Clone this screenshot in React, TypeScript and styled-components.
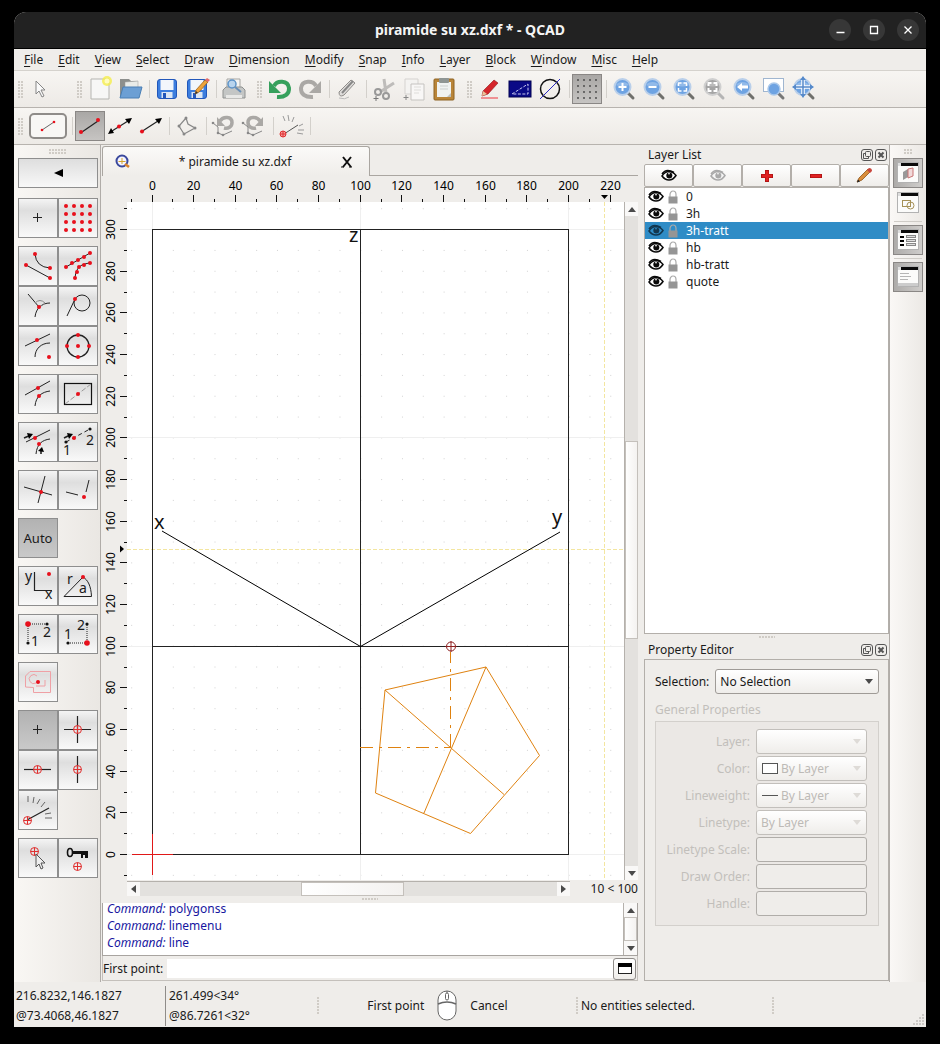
import React from "react";
import styled, { createGlobalStyle, css } from "styled-components";

const GlobalStyle = createGlobalStyle`
  *, *::before, *::after { box-sizing: border-box; }
  body { margin: 0; background: #000; }
  body, button, input, select {
    font-family: "Noto Sans", "Open Sans", sans-serif;
    font-size: 12px;
    color: #1a1a1a;
  }
  button { cursor: default; }
  svg { display: block; }
`;

/* ---------- window frame ---------- */

const Desktop = styled.div`
  min-height: 100vh;
  padding: 12px 14px 17px;
  display: flex;
  background: #000;
`;
const Window = styled.div`
  flex: 1;
  min-width: 0;
  display: flex;
  flex-direction: column;
  background: #efedea;
  border-radius: 12px 12px 0 0;
  overflow: hidden;
`;
const TitleBar = styled.header`
  height: 37px;
  display: grid;
  grid-template-columns: 1fr auto 1fr;
  align-items: center;
  background: #222;
  border-bottom: 1px solid #000;
`;
const Title = styled.h1`
  grid-column: 2;
  margin: 0;
  font-size: 14px;
  line-height: 20px;
  font-weight: 700;
  color: #f4f4f4;
`;
const WindowButtons = styled.div`
  justify-self: end;
  display: flex;
  gap: 12px;
  padding-right: 7px;
`;
const WindowButton = styled.button`
  width: 22px;
  height: 22px;
  padding: 0;
  border: 0;
  border-radius: 50%;
  background: #373737;
`;

/* ---------- menu ---------- */

const MenuBar = styled.nav`
  height: 22px;
  display: flex;
  align-items: center;
  padding: 0 2px;
  border-bottom: 1px solid #d5d2cd;
`;
const MenuItem = styled.button`
  padding: 0 7px 0 8px;
  border: 0;
  background: none;
  line-height: 20px;
  white-space: nowrap;
  &::first-letter { text-decoration: underline; text-underline-offset: 2px; }
`;

/* ---------- tool bars ---------- */

const ToolBar = styled.div`
  height: 37px;
  display: flex;
  align-items: center;
  background: linear-gradient(#f7f5f2, #edeae6);
  border-bottom: 1px solid #b7b3ae;
`;
const ToolGroup = styled.div<{ $gap?: number }>`
  display: flex;
  align-items: center;
  margin-right: ${(p) => p.$gap ?? 4}px;
`;
const dots = css`
  background-image: radial-gradient(circle at 1px 1px, #d0ccc6 1px, transparent 1px);
  background-size: 3px 3px;
`;
const Grip = styled.span<{ $w: number; $h: number }>`
  ${dots}
  flex: none;
  width: ${(p) => p.$w}px;
  height: ${(p) => p.$h}px;
`;
const BarGrip = styled(Grip)`
  margin: 0 3px 0 4px;
`;
const Divider = styled.span`
  flex: none;
  width: 1px;
  height: 18px;
  margin: 0 2px 0 4px;
  background: #d3d0cb;
`;
const ToolButton = styled.button<{ $on?: boolean }>`
  width: 30px;
  height: 30px;
  padding: 0;
  display: flex;
  align-items: center;
  justify-content: center;
  border: 1px solid ${(p) => (p.$on ? "#8a8785" : "transparent")};
  background: ${(p) => (p.$on ? "linear-gradient(#a9a7a5, #c6c4c2)" : "none")};
`;
const CurrentTool = styled.button`
  width: 38px;
  height: 26px;
  margin: 0 1px 0 3px;
  padding: 0;
  display: flex;
  align-items: center;
  justify-content: center;
  border: 2px solid #8f8c89;
  border-radius: 5px;
  background: #f8f7f5;
`;

/* ---------- body columns ---------- */

const Body = styled.div`
  flex: 1;
  display: flex;
  min-height: 0;
`;
const SnapDock = styled.aside`
  flex: none;
  width: 87px;
  padding: 4px 2px 0 4px;
  display: flex;
  flex-direction: column;
  align-items: center;
  gap: 8px;
  background: linear-gradient(90deg, #f9f7f4, #eae7e3);
  border-right: 1px solid #b0aca8;
`;
const BackButton = styled.button`
  width: 80px;
  height: 30px;
  margin: -5px 0 2px;
  padding: 0;
  display: flex;
  align-items: center;
  justify-content: center;
  border: 1px solid #8e8e8e;
  background: linear-gradient(#dedede, #f8f8f8);
`;
const SnapGroup = styled.div`
  width: 80px;
  display: grid;
  grid-template-columns: 40px 40px;
`;
const SnapButton = styled.button<{ $on?: boolean }>`
  width: 40px;
  height: 40px;
  padding: 0;
  display: flex;
  align-items: center;
  justify-content: center;
  font-size: 13px;
  border: 1px solid #8e8e8e;
  background: ${(p) => (p.$on ? "linear-gradient(#b2b2b2, #c9c9c9)" : "linear-gradient(#f4f4f4, #dedede 30%, #f9f9f9)")};
  svg { width: 38px; height: 38px; overflow: visible; }
`;

const Center = styled.main`
  flex: 1;
  min-width: 0;
  display: flex;
  flex-direction: column;
  padding: 0 6px 1px 1px;
`;
const TabBar = styled.div`
  height: 31px;
  padding-top: 1px;
  display: flex;
  align-items: stretch;
`;
const Tab = styled.div`
  width: 268px;
  display: grid;
  grid-template-columns: 16px 1fr 16px;
  align-items: center;
  padding: 0 14px 0 12px;
  text-align: center;
  background: linear-gradient(#fbfaf8, #efedea);
  border: 1px solid #aaa6a1;
  border-bottom: 0;
  border-radius: 3px 3px 0 0;
`;
const TabFill = styled.div`
  flex: 1;
  border-bottom: 1px solid #aaa6a1;
`;
const TabClose = styled.button`
  padding: 0;
  border: 0;
  background: none;
`;
const ViewGrid = styled.div`
  flex: 1;
  min-height: 0;
  display: grid;
  grid-template-columns: 25px minmax(0, 1fr) 14px;
  grid-template-rows: 26px minmax(0, 1fr) 16px;
`;
const TopRuler = styled.svg`
  grid-column: 1 / 4;
  width: 100%;
  height: 26px;
`;
const SideRuler = styled.svg`
  width: 25px;
  height: 100%;
`;
const Canvas = styled.svg`
  width: 100%;
  height: 100%;
  background: #fff;
`;
const BottomRow = styled.div`
  grid-column: 2 / 4;
  display: flex;
  align-items: center;
  min-width: 0;
`;
const Readout = styled.span`
  width: 68px;
  text-align: right;
  line-height: 15px;
  white-space: nowrap;
`;

const Scroller = styled.div<{ $dir: "row" | "column" }>`
  flex: 1;
  min-width: 0;
  min-height: 0;
  display: flex;
  flex-direction: ${(p) => p.$dir};
  background: #e3e1de;
  border-${(p) => (p.$dir === "row" ? "top" : "left")}: 1px solid #b5b1ac;
  ${(p) => (p.$dir === "row" ? "height: 15px;" : "width: 14px;")}
`;
const ScrollButton = styled.button`
  flex: none;
  width: 13px;
  height: 14px;
  padding: 0;
  display: flex;
  align-items: center;
  justify-content: center;
  border: 0;
  background: #f9f8f7;
`;
const ScrollSpace = styled.div<{ $grow: number }>`
  flex: ${(p) => p.$grow} 1 0;
`;
const ScrollThumb = styled(ScrollSpace)`
  background: linear-gradient(90deg, #fff, #f3f1ef);
  outline: 1px solid #c4c0bb;
  outline-offset: -1px;
`;

const Splitter = styled.div`
  height: 7px;
  display: flex;
  align-items: center;
  justify-content: center;
`;
const CommandLog = styled.div`
  height: 53px;
  display: flex;
  background: #fff;
  border: solid #a8a4a0;
  border-width: 0 1px 1px;
`;
const LogLines = styled.div`
  flex: 1;
  display: flex;
  flex-direction: column;
  justify-content: flex-end;
  padding: 0 4px 4px;
  color: #1616a0;
`;
const LogLine = styled.p`
  flex: none;
  margin: 0;
  line-height: 17px;
`;
const LogScroll = styled.div`
  width: 14px;
  display: flex;
`;
const CommandRow = styled.div`
  height: 25px;
  padding: 1px 1px 0 0;
  display: flex;
  align-items: center;
  border: solid #c4c0bb;
  border-width: 0 1px 1px;
`;
const CommandInput = styled.input`
  flex: 1;
  min-width: 0;
  height: 19px;
  margin-left: 4px;
  padding: 0 4px;
  border: 0;
  background: #fff;
`;
const SmallButton = styled.button`
  width: 23px;
  height: 22px;
  padding: 0;
  display: flex;
  align-items: center;
  justify-content: center;
  border: 1px solid #8f8c89;
  border-radius: 3px;
  background: linear-gradient(#fff, #efedea);
`;

/* ---------- right dock ---------- */

const RightDock = styled.aside`
  flex: none;
  width: 245px;
  display: flex;
  flex-direction: column;
  padding-bottom: 1px;
`;
const PanelHead = styled.div`
  height: 19px;
  display: flex;
  align-items: center;
  gap: 2px;
  padding: 0 2px 0 4px;
`;
const PanelTitle = styled.h2`
  flex: 1;
  margin: 0;
  font-size: 12px;
  line-height: 18px;
  font-weight: 400;
`;
const HeadButton = styled.button`
  width: 12px;
  height: 12px;
  padding: 0;
  border: 0;
  background: none;
`;
const LayerTools = styled.div`
  height: 23px;
  display: grid;
  grid-template-columns: repeat(5, 1fr);
`;
const LayerTool = styled.button`
  padding: 0;
  display: flex;
  align-items: center;
  justify-content: center;
  border: 1px solid #b3afaa;
  border-radius: 2px;
  background: linear-gradient(#fff, #efedea);
`;
const LayerItems = styled.ul`
  height: 447px;
  margin: 0;
  padding: 0;
  list-style: none;
  background: #fff;
  border: 1px solid #b3afaa;
`;
const LayerItem = styled.li<{ $selected?: boolean }>`
  height: 17px;
  display: flex;
  align-items: center;
  line-height: 17px;
  padding-left: 3px;
  gap: 3px;
  ${(p) => p.$selected && "background: #2f8cc6; color: #fff;"}
`;
const LayerName = styled.span`
  margin-left: 4px;
`;
const LayerSplitter = styled(Splitter)`
  height: 6px;
`;
const PropertyBox = styled.div`
  flex: 1;
  padding: 9px 9px 9px 10px;
  border: 1px solid #b3afaa;
`;
const SelectionRow = styled.div`
  display: flex;
  align-items: center;
  gap: 6px;
`;
const Combo = styled.span<{ $disabled?: boolean }>`
  flex: 1;
  position: relative;
  display: block;
  height: 25px;
  select {
    appearance: none;
    width: 100%;
    height: 25px;
    padding: 0 4px;
    border: 1px solid ${(p) => (p.$disabled ? "#c2bfbb" : "#9f9b97")};
    border-radius: 3px;
    background: linear-gradient(#fff, #efedea);
    color: ${(p) => (p.$disabled ? "#bdbab6" : "#1a1a1a")};
    opacity: 1;
  }
`;
const ComboArrow = styled.svg`
  position: absolute;
  right: 6px;
  top: 10px;
  pointer-events: none;
`;
const Swatch = styled.svg`
  position: absolute;
  left: 6px;
  top: 7px;
  pointer-events: none;
`;
const IconCombo = styled(Combo)`
  select { padding-left: 24px; }
`;
const GroupTitle = styled.h3`
  margin: 7px 0 2px;
  font-size: 12px;
  line-height: 18px;
  font-weight: 400;
  color: #c2bfbb;
`;
const PropertyGroup = styled.div`
  padding: 7px 11px 9px 10px;
  display: grid;
  row-gap: 2px;
  background: #ebe8e5;
  border: 1px solid #d3d0cc;
`;
const PropertyRow = styled.div`
  height: 25px;
  display: grid;
  grid-template-columns: 1fr 111px;
  align-items: center;
  column-gap: 6px;
  label { text-align: right; color: #c2bfbb; }
`;
const PropertyInput = styled.input`
  width: 100%;
  height: 25px;
  padding: 0 4px;
  border: 1px solid #b0ada9;
  border-radius: 3px;
  background: #efedea;
`;

const SideBar = styled.aside`
  flex: none;
  width: 37px;
  padding: 3px 2px 0;
  display: flex;
  flex-direction: column;
  align-items: center;
  border-left: 1px solid #b0aca8;
  background: linear-gradient(90deg, #faf8f6, #ebe8e4);
`;
const SideButton = styled(ToolButton)<{ $on?: boolean }>`
  flex: none;
  ${(p) => p.$on && "background: linear-gradient(90deg, #adaba9, #cfcdcb);"}
`;
const SideLine = styled.span`
  width: 28px;
  height: 1px;
  margin: 3px 0;
  background: #cfccc7;
`;
const SideGrip = styled(Grip)`
  margin: 1px 0 3px;
`;

/* ---------- status bar ---------- */

const StatusBar = styled.footer`
  height: 45px;
  padding-top: 2px;
  display: flex;
  align-items: center;
  line-height: 20px;
  white-space: nowrap;
`;
const Coordinates = styled.div<{ $line?: boolean }>`
  width: ${(p) => (p.$line ? 152 : 151)}px;
  height: 40px;
  padding-left: ${(p) => (p.$line ? 3 : 2)}px;
  ${(p) => p.$line && "border-left: 1px solid #8f8c89;"}
`;
const MouseHints = styled.div`
  width: 256px;
  padding-right: 21px;
  display: flex;
  align-items: center;
  justify-content: center;
  gap: 13px;
`;
const StatusText = styled.span`
  width: 193px;
  padding-left: 2px;
`;
const SizeGrip = styled.span`
  align-self: flex-end;
  margin-left: auto;
`;

/* ---------- icon helpers ---------- */

type Pt = [number, number];
const RED = "#e8101c";

const Dots = ({ at, r = 2, fill = RED }: { at: Pt[]; r?: number; fill?: string }) => (
  <>
    {at.map(([x, y]) => (
      <circle key={`${x}-${y}`} cx={x} cy={y} r={r} fill={fill} />
    ))}
  </>
);
const Target = ({ x, y, r = 4 }: { x: number; y: number; r?: number }) => (
  <g fill="none" stroke="#e03030" strokeWidth="1">
    <circle cx={x} cy={y} r={r} />
    <path d={`M${x - r} ${y}h${r * 2}M${x} ${y - r}v${r * 2}`} />
  </g>
);
const Ink = ({ d, w = 1, c = "#222", dash }: { d: string; w?: number; c?: string; dash?: string }) => (
  <path d={d} fill="none" stroke={c} strokeWidth={w} strokeDasharray={dash} />
);
const Glyph = ({ x, y, children, size = 14 }: { x: number; y: number; children: string; size?: number }) => (
  <text x={x} y={y} fontSize={size} fill="#1a1a1a">{children}</text>
);
const Snap = ({ children }: { children: React.ReactNode }) => (
  <svg viewBox="1 1 38 38" aria-hidden="true">{children}</svg>
);
const Icon = ({ children, size = 26 }: { children: React.ReactNode; size?: number }) => (
  <svg width={size} height={size} viewBox="0 0 26 26" aria-hidden="true">{children}</svg>
);

const Arrow = ({ dir, fill = "#4a4a4a" }: { dir: "up" | "down" | "left" | "right"; fill?: string }) => {
  const shapes = { up: "0,5 4,0 8,5", down: "0,0 8,0 4,5", left: "5,0 5,8 0,4", right: "0,0 5,4 0,8" };
  const flat = dir === "up" || dir === "down";
  return (
    <svg width={flat ? 8 : 5} height={flat ? 5 : 8} aria-hidden="true">
      <polygon points={shapes[dir]} fill={fill} />
    </svg>
  );
};

/* ---------- snap tool drawings ---------- */

type Tool = { name: string; art: React.ReactNode; on?: boolean };
const PLUS = <Ink d="M15 19.5h9M19.5 15v9" />;

const snapGroups: Tool[][] = [
  [
    { name: "Free", art: PLUS },
    { name: "Grid", art: <Dots at={[8, 16, 24, 32].flatMap((x) => [8, 16, 24, 32].map((y): Pt => [x, y]))} /> },
  ],
  [
    { name: "End points", art: <><Ink d="M8 19L32 32M17 8Q18 21 32 22" /><Dots at={[[8, 19], [32, 32], [17, 8], [32, 22]]} /></> },
    { name: "On entity", art: <><Ink d="M8 21L32 7M17 32C18 20 24 18 32 17" /><Dots at={[[8, 21], [14, 17], [20, 14], [26, 11], [32, 7], [32, 17], [26, 19], [21, 21], [19, 26], [17, 32]]} /></> },
    { name: "Perpendicular", art: <><Ink d="M10 8L21 21M17 31C18 22 24 17 32 17" /><Ink d="M17 17Q22 12 27 17Q24 20 21 21" c="#888" /><Dots at={[[21, 21]]} /></> },
    { name: "Tangential", art: <><Ink d="M17 13L9 30" /><circle cx="24" cy="17" r="8" fill="none" stroke="#222" /><Dots at={[[17, 13]]} /></> },
    { name: "Reference", art: <><Ink d="M7 20L32 8M17 31C17 23 23 17 32 17" /><Dots at={[[19, 14], [31, 31]]} /></> },
    { name: "Center", art: <><circle cx="20" cy="20" r="11" fill="none" stroke="#222" strokeWidth="1.3" /><Dots at={[[20, 20], [9, 20], [31, 20], [20, 9], [20, 31]]} /></> },
  ],
  [
    { name: "Middle", art: <><Ink d="M7 21L32 7M17 32C18 22 24 18 32 17" /><Dots at={[[20, 14], [21, 22]]} /></> },
    { name: "Middle of two", art: <><rect x="6.5" y="9.5" width="27" height="21" fill="none" stroke="#111" strokeWidth="1.2" /><Ink d="M7 30L33 10" c="#999" dash="5 2" /><Dots at={[[20, 20]]} /></> },
  ],
  [
    { name: "Distance", art: <><Ink d="M8 20L32 8M18 32C19 22 24 18 32 17" /><Ink d="M6 16L13 13M23 32V28" w={1.6} /><path d="M9 11l6 1-4 5zM20 29l4-4 2 5z" /><Dots at={[[17, 16], [21, 22]]} /></> },
    { name: "Distance between", art: <><Ink d="M8 20L32 7" dash="4 3" /><Ink d="M6 16L12 13" w={1.6} /><path d="M9 11l6 1-4 5z" /><Dots at={[[8, 20], [32, 7]]} r={1.6} fill="#111" /><Dots at={[[16, 16]]} /><Glyph x={5} y={33}>1</Glyph><Glyph x={28} y={23}>2</Glyph></> },
  ],
  [
    { name: "Intersection", art: <><Ink d="M6 17L34 25M27 6L20 33" /><Dots at={[[23, 22]]} /></> },
    { name: "Manual intersection", art: <><Ink d="M8 22L20 25M31 10L28 22" /><Dots at={[[26, 27]]} /></> },
  ],
  [{ name: "Auto", art: null, on: true }],
  [
    { name: "Cartesian coordinate", art: <><Ink d="M16.5 6V24.5H34" w={1.2} /><Glyph x={7} y={15}>y</Glyph><Glyph x={27} y={33}>x</Glyph><Dots at={[[31, 8]]} /></> },
    { name: "Polar coordinate", art: <><Ink d="M25 11L6 30.5H33.500C33 20 30 14 25 11" /><Glyph x={9} y={18}>r</Glyph><Glyph x={21} y={27}>a</Glyph><Dots at={[[25, 11]]} /></> },
  ],
  [
    { name: "Restrict xy", art: <><Ink d="M10 10H29M10 10V29" dash="1 1" /><Dots at={[[29, 10], [10, 29]]} r={1.6} fill="#111" /><Dots at={[[10, 10]]} r={2.8} /><Glyph x={13} y={32}>1</Glyph><Glyph x={25} y={23}>2</Glyph></> },
    { name: "Restrict yx", art: <><Ink d="M10 29H29V10" dash="1 1" /><Dots at={[[10, 29], [29, 10]]} r={1.6} fill="#111" /><Dots at={[[29, 29]]} r={2.8} /><Glyph x={6} y={25}>1</Glyph><Glyph x={19} y={16}>2</Glyph></> },
  ],
  [{ name: "Interactive point", art: <><Ink d="M7.500 25V14L12 9.500H32.500V30.500H15.500V25.500zM19 14a4.500 4.500 0 1 0-1 7M27 18v6h-9" c="#efa0a5" /><Dots at={[[20, 20]]} /></> }],
  [
    { name: "Restrict off", art: PLUS, on: true },
    { name: "Restrict orthogonally", art: <><Ink d="M6 19.500h27M19.500 6v27" w={1.2} /><Target x={19.5} y={19.5} /></> },
    { name: "Restrict horizontally", art: <><Ink d="M6 19.500h27" w={1.2} /><Target x={19.5} y={19.5} /></> },
    { name: "Restrict vertically", art: <><Ink d="M19.500 6v27" w={1.2} /><Target x={19.5} y={19.5} /></> },
    { name: "Restrict angle", art: <><Ink d="M9 30L31 18" w={1.2} /><Ink d="M10 6v6M16 7l-1 6M22 9l-3 5M27 12l-4 5M33 23l-6 1M34 28h-7" c="#666" /><Target x={9.5} y={30.5} /></> },
  ],
  [
    { name: "Set relative zero", art: <><Target x={16.5} y={13.5} /><path d="M18 16v13l3-3 2 5 2-1-2-5h4z" fill="#eee" stroke="#555" /></> },
    { name: "Lock relative zero", art: <><ellipse cx="12" cy="14.500" rx="2.500" ry="4" fill="none" stroke="#111" strokeWidth="1.600" /><path d="M15 13h15v7h-3v-3h-2v3h-2v-4h-8z" fill="#111" /><Target x={19.5} y={28.5} /></> },
  ],
];

/* ---------- main tool bar drawings ---------- */

const Floppy = () => (
  <>
    <rect x="3.500" y="3.500" width="19" height="19" rx="2.500" fill="#3c7ede" stroke="#2257ba" />
    <rect x="6.500" y="4" width="13" height="10" fill="#f2f6fb" />
    <rect x="7.500" y="16" width="11" height="6" fill="#dce6f3" />
    <rect x="9" y="17" width="3" height="5" fill="#2257ba" />
  </>
);
const Pencil = () => (
  <>
    <path d="M11 18l1-4 9-10 3 2-9 10z" fill="#eea43c" stroke="#a56616" strokeWidth=".8" />
    <path d="M21 4l2-2 3 2-2 2z" fill="#e46a6a" />
    <path d="M11 18l1-3 2 2z" fill="#333" />
  </>
);
const Magnifier = ({ gray, children }: { gray?: boolean; children?: React.ReactNode }) => (
  <>
    <path d="M17 17l5 5" stroke={gray ? "#b5b5b5" : "#70706c"} strokeWidth="3" strokeLinecap="round" />
    <circle cx="11.500" cy="11" r="8" fill={gray ? "#a5a5a5" : "#6ea3e2"} stroke={gray ? "#cfcfcf" : "#b9cfea"} strokeWidth="2" />
    <path d="M5 9a7.500 6 0 0 1 13 0q-7 3-13 0" fill="#fff" opacity=".25" />
    <g fill="none" stroke="#fff" strokeWidth="2">{children}</g>
  </>
);
const UndoArrow = ({ fill }: { fill: string }) => (
  <>
    <path d="M7 10C10 4 21 4 22 12C22.500 18 18 21.500 10 21" fill="none" stroke={fill} strokeWidth="4" />
    <path d="M2 5v12h12z" fill={fill} />
  </>
);

const fileTools: (Tool | null)[] = [
  { name: "New", art: <><path d="M4 3h18v20H4z" fill="#f7f7f6" stroke="#b5b5b1" /><circle cx="20" cy="5" r="5" fill="#f5ee4a" opacity=".8" /><circle cx="20" cy="5" r="2.500" fill="#fffcc0" /></> },
  { name: "Open", art: <><path d="M3 3h9l2 2h7v16H3z" fill="#8d8f8c" /><path d="M8 6l13-1v13H8z" fill="#e9ebe8" stroke="#999" strokeWidth=".5" /><path d="M6 11h19l-3 11H3z" fill="#6c9fd4" stroke="#4a7fb5" /></> },
  null,
  { name: "Save", art: <Floppy /> },
  { name: "Save as", art: <><Floppy /><Pencil /></> },
  null,
  { name: "Print preview", art: <><path d="M6 3h13v11H6z" fill="#f4f4f2" stroke="#a5a5a2" /><path d="M2 14l3-3h16l3 3v8H2z" fill="#c4c6c5" stroke="#8f9190" /><path d="M5 19h16v3H5z" fill="#e8e8e6" /><circle cx="11" cy="8" r="4" fill="#b8d4ee" stroke="#5d93c8" strokeWidth="1.500" /><path d="M14 11l6 5" stroke="#6a8fb5" strokeWidth="2" /></> },
];
const editTools: (Tool | null)[] = [
  { name: "Undo", art: <UndoArrow fill="#36a05c" /> },
  { name: "Redo", art: <g transform="translate(26 0) scale(-1 1)"><UndoArrow fill="#aaa8a5" /></g> },
  null,
  { name: "Delete", art: <><path d="M5 16L17 4l4 3L10 19q-5 3-5-3z" fill="#dedcda" stroke="#8e8c89" /><path d="M8 17L19 5" stroke="#888" strokeWidth="2" /><path d="M5 22q6 2 10-1" stroke="#bbb" fill="none" /></> },
  null,
  { name: "Cut", art: <><path d="M13 3l2 14M23 7L9 16" stroke="#bebcba" strokeWidth="3" /><circle cx="7" cy="16" r="3" fill="none" stroke="#999" strokeWidth="2" /><circle cx="15" cy="20" r="3" fill="none" stroke="#999" strokeWidth="2" /><Ink d="M5 20v5M2.500 22.500h5" c="#777" /></> },
  { name: "Copy", art: <><path d="M4 3h13v15H4z" fill="#f4f3f1" stroke="#d5d3d0" /><path d="M10 8h13v16H10z" fill="#f8f7f6" stroke="#c5c3c0" /><path d="M13 11h7M13 14h7M13 17h5" stroke="#deddda" /><Ink d="M5 19v5M2.500 21.500h5" c="#888" /></> },
  { name: "Paste", art: <><rect x="3" y="3" width="20" height="21" rx="1" fill="#b98539" stroke="#8e6222" /><path d="M6 6h14v15H6z" fill="#f0f2f1" /><path d="M16 21l4-4v4z" fill="#bcc0be" /><path d="M9 10h8M9 13h8" stroke="#cdd0ce" /><rect x="8" y="2" width="10" height="5" rx="1" fill="#8f9593" /></> },
];
const viewTools: (Tool | null)[] = [
  { name: "Draft mode", art: <><path d="M6 15L17 4l4 3-10 11-6 2z" fill="#d5252b" stroke="#8e1418" strokeWidth=".6" /><path d="M5 20l1-5 4 3z" fill="#e8c39a" /><path d="M4 22h17" stroke="#ef7277" strokeWidth="1.500" /></> },
  { name: "Screen linetypes", art: <><rect x="2" y="5" width="22" height="16" fill="#0a0a86" stroke="#000050" /><path d="M5 18L21 8v10z" fill="none" stroke="#c9c9f0" strokeDasharray="3 1.500" /></> },
  { name: "Show bounds", art: <><circle cx="13" cy="13" r="9.500" fill="none" stroke="#111" strokeWidth="1.500" /><path d="M3 23L23 3" stroke="#2a2ac0" /></> },
  null,
  { name: "Grid", on: true, art: <Dots r={0.9} fill="#444" at={[4, 10, 16, 22].flatMap((x) => [4, 10, 16, 22].map((y): Pt => [x, y]))} /> },
  null,
  { name: "Zoom in", art: <Magnifier><path d="M11.500 7v8M7.500 11h8" /></Magnifier> },
  { name: "Zoom out", art: <Magnifier><path d="M7.500 11h8" /></Magnifier> },
  { name: "Auto zoom", art: <Magnifier><path d="M7.500 10V7h3M12.500 7h3v3M15.500 12v3h-3M10.500 15h-3v-3" strokeWidth="1.500" /></Magnifier> },
  { name: "Zoom to selection", art: <Magnifier gray><path d="M7.500 10V7h3M12.500 7h3v3M15.500 12v3h-3M10.500 15h-3v-3" /></Magnifier> },
  { name: "Previous view", art: <Magnifier><path d="M10 11h7" strokeWidth="3" /><path d="M11 7v8l-5-4z" fill="#fff" stroke="none" /></Magnifier> },
  { name: "Window zoom", art: <><rect x="2.500" y="2.500" width="20" height="13" fill="#fff" stroke="#a0b6d0" /><path d="M17 17l5 5" stroke="#777" strokeWidth="3" strokeLinecap="round" /><circle cx="13" cy="13" r="6" fill="#6ea3e2" stroke="#aac8ea" strokeWidth="1.500" /></> },
  { name: "Pan", art: <><Magnifier /><g transform="translate(-1 -1)"><path d="M13 2v20M3 12h20" stroke="#fff" strokeWidth="3.500" /><path d="M13 3v18M4 12h18" stroke="#5589ca" strokeWidth="1.500" /><path d="M13 1l3 4h-6zM13 23l3-4h-6zM2 12l4-3v6zM24 12l-4-3v6z" fill="#5589ca" /></g></> },
];

const CursorIcon = () => (
  <Icon><path d="M8 5v13l3-3 3 6 2-1-3-6h4z" fill="#fafafa" stroke="#858585" /></Icon>
);

const SegmentSwirl = () => (
  <>
    <path d="M9 8C12 3 21 3 21 9.500C21 14 17 16 13 15" fill="none" stroke="#aaa8a5" strokeWidth="3.500" />
    <path d="M6 4v9h8z" fill="#aaa8a5" />
  </>
);
const SegmentTrail = () => (
  <>
    <Ink d="M2 10l5 4 0 6 5 2 9-4" c="#888" />
    <Dots r={1.3} fill="#888" at={[[2, 10], [7, 20], [12, 22]]} />
  </>
);
const lineTools: (Tool | null)[] = [
  { name: "Line from 2 points", on: true, art: <><Ink d="M5 19L21 8" w={1.2} /><Dots at={[[4, 19], [21, 7]]} /></> },
  { name: "Infinite line", art: <><Ink d="M5 18L21 8" w={1.2} /><path d="M1 21l6-1-3-5zM25 5l-7 1 4 5z" /><Dots at={[[12, 13.5]]} /></> },
  { name: "Ray", art: <><Ink d="M4 19L21 8" w={1.2} /><path d="M25 5l-7 1 4 5z" /><Dots at={[[5, 18.500]]} /></> },
  null,
  { name: "Polyline", art: <><Ink d="M12 5L5 13l5 8 11-6-7-4-2-6" c="#888" w={1.2} /><Dots r={1.5} fill="#888" at={[[12, 5], [5, 13], [10, 21], [21, 15]]} /></> },
  null,
  { name: "Undo segment", art: <><SegmentSwirl /><SegmentTrail /></> },
  { name: "Redo segment", art: <><g transform="translate(28 0) scale(-1 1)"><SegmentSwirl /></g><SegmentTrail /></> },
  null,
  { name: "Angle", art: <><Ink d="M6 21L20 12" c="#555" /><Ink d="M5 3l2 5M10 2l1 6M16 4l-2 5M21 13l4-2M20 17h6M19 20l6 1" c="#999" /><circle cx="5" cy="21" r="3" fill="#f4a0a0" stroke="#e03030" /><Ink d="M2 21h6M5 18v6" c="#e03030" /></> },
  null,
];

const Tools = ({ items }: { items: (Tool | null)[] }) => (
  <>
    {items.map((t, i) =>
      t ? (
        <ToolButton key={t.name} $on={t.on} aria-pressed={t.on} aria-label={t.name}><Icon>{t.art}</Icon></ToolButton>
      ) : (
        <Divider key={i} />
      )
    )}
  </>
);

/* ---------- drawing view ---------- */

const STEP = 2.083;
const ORIGIN: Pt = [25.5, 652.5];

const dashes = (y: number, from: number, to: number, pattern: number[]) => {
  let d = "";
  let x = from;
  for (let i = 0; x < to; i++) {
    const len = pattern[i % pattern.length];
    if (i % 2 === 0) d += `M${x} ${y}H${Math.min(x + len, to)}`;
    x += len;
  }
  return d;
};

const HorizontalRuler = () => (
  <TopRuler aria-hidden="true">
    {Array.from({ length: 24 }, (_, i) => (i - 1) * 10).map((v) => {
      const x = Math.floor(50 + v * STEP) + 0.5;
      const major = v % 20 === 0;
      return (
        <g key={v}>
          <path d={`M${x} ${major ? 19 : 23}V26`} stroke="#111" />
          {major && <text x={x} y="14" fontSize="12" textAnchor="middle">{v}</text>}
        </g>
      );
    })}
    <path d="M499 19h7l-3.500 4z" />
  </TopRuler>
);

const VerticalRuler = () => (
  <SideRuler aria-hidden="true">
    {Array.from({ length: 33 }, (_, i) => (i - 1) * 10).map((v) => {
      const y = Math.floor(652.5 - v * STEP) + 0.5;
      const major = v % 20 === 0;
      return (
        <g key={v}>
          <path d={`M${major ? 18 : 22} ${y}H25`} stroke="#111" />
          {major && (
            <text transform={`translate(13 ${y}) rotate(-90)`} fontSize="12" textAnchor="middle">{v}</text>
          )}
        </g>
      );
    })}
    <path d="M18 343.500v7l4-3.500z" />
  </SideRuler>
);

const DrawingView = () => (
  <Canvas role="img" aria-label="Drawing">
    <defs>
      <pattern id="grid" x={ORIGIN[0] - 0.5} y={ORIGIN[1] - 0.5} width={STEP * 10} height={STEP * 10} patternUnits="userSpaceOnUse">
        <rect width="1" height="1" fill="#d2d2d2" />
      </pattern>
    </defs>
    <rect width="100%" height="100%" fill="url(#grid)" />
    <g stroke="#efefef">
      <path d="M25.500 0V678M233.500 0V678M441.500 0V678M0 27.500H497M0 235.500H497M0 444.500H497M0 652.500H497" />
    </g>
    <g stroke="#f3e6a0">
      <path d={dashes(347.5, 0, 2000, [4, 2])} />
      <path d="M477.500 0V2000" strokeDasharray="4 2" />
    </g>
    <g fill="none" stroke="#222" shapeRendering="crispEdges">
      <path d="M25.500 27.500H441.500V652.500H25.500zM233.500 27.500V652.500M25.500 444.500H441.500" />
    </g>
    <path d="M35 329L233.500 444.500L433 330" fill="none" stroke="#000" />
    <path d="M5 652.500H46M25.500 632V673" stroke="#e01818" />
    <g fill="none" stroke="#df8210">
      <path d="M258 488L359 465L412.500 553.500L343.500 631.500L248.500 591z" />
      <path d="M258 488L377 592.500M359 465L297 611" />
      <path d={dashes(545.5, 233, 324, [13, 6, 3, 6])} />
      <path d="M323.500 545V450" strokeDasharray="13 6 3 6" />
    </g>
    <g fill="none" stroke="#8e1f1f">
      <circle cx="324" cy="444.500" r="4.500" />
      <path d="M318.500 444.500h11M324 439v11" />
    </g>
    <g fontSize="20" fill="#111">
      <text x="27" y="327">x</text>
      <text x="425" y="322">y</text>
      <text x="222" y="40">z</text>
    </g>
  </Canvas>
);

const ScrollBar = ({ dir, sizes }: { dir: "row" | "column"; sizes: [number, number, number] }) => (
  <Scroller $dir={dir}>
    <ScrollButton aria-label="Scroll back"><Arrow dir={dir === "row" ? "left" : "up"} /></ScrollButton>
    <ScrollSpace $grow={sizes[0]} />
    <ScrollThumb $grow={sizes[1]} />
    <ScrollSpace $grow={sizes[2]} />
    <ScrollButton aria-label="Scroll forward"><Arrow dir={dir === "row" ? "right" : "down"} /></ScrollButton>
  </Scroller>
);

/* ---------- layer list and properties ---------- */

const Eye = ({ color = "#0a0a0a", back = "#fff" }: { color?: string; back?: string }) => (
  <svg width="16" height="13" viewBox="0 0 16 13" aria-hidden="true">
    <path d="M1 7Q4 2.500 8 2.500T15 6.500Q12 11 8 11T1 7z" fill={back} stroke={color} strokeWidth="1.500" />
    <circle cx="8.300" cy="6.500" r="3" fill={color} />
    <path d="M7 5q1-1 2 0" stroke={back} fill="none" />
    <path d="M1 5Q5-1 13 3.500" fill="none" stroke={color} strokeWidth="1.500" />
  </svg>
);
const Lock = () => (
  <svg width="12" height="14" viewBox="0 0 12 14" aria-hidden="true">
    <path d="M3 7V4.500a3 3.500 0 0 1 6 0V7" fill="none" stroke="#aaa" strokeWidth="1.200" />
    <rect x="1.500" y="6.500" width="9" height="7" fill="#959595" />
  </svg>
);
const PanelButtons = () => (
  <>
    <HeadButton aria-label="Float">
      <svg width="12" height="12" viewBox="0 0 12 12" fill="none" stroke="#555">
        <rect x=".5" y=".5" width="11" height="11" rx="2.500" />
        <rect x="4.500" y="2.500" width="5" height="5" rx="1" />
        <path d="M4 4.500H2.500v5h5V8" />
      </svg>
    </HeadButton>
    <HeadButton aria-label="Close">
      <svg width="12" height="12" viewBox="0 0 12 12" fill="none" stroke="#555">
        <rect x=".5" y=".5" width="11" height="11" rx="2.500" />
        <path d="M3.500 3.500l5 5M8.500 3.500l-5 5" strokeWidth="2" />
      </svg>
    </HeadButton>
  </>
);

const layers = ["0", "3h", "3h-tratt", "hb", "hb-tratt", "quote"];
const layerTools: Tool[] = [
  { name: "Show all layers", art: <Eye /> },
  { name: "Hide all layers", art: <Eye color="#a9a9a9" back="#f5f5f5" /> },
  { name: "Add layer", art: <svg width="14" height="14"><path d="M7 1v12M1 7h12" stroke="#b01414" strokeWidth="4" /><path d="M7 2v10M2 7h10" stroke="#e02222" strokeWidth="2.500" /></svg> },
  { name: "Remove layer", art: <svg width="14" height="14"><path d="M1 7h12" stroke="#b01414" strokeWidth="4" /><path d="M2 7h10" stroke="#e02222" strokeWidth="2.500" /></svg> },
  { name: "Edit layer", art: <svg width="17" height="17" viewBox="0 0 17 17"><path d="M1 15l2-4 9-9 3 2-9 9z" fill="#d98d3a" stroke="#8f5618" strokeWidth=".8" /><path d="M11 3l2-2q3 0 3 3l-2 2z" fill="#c8463c" /><path d="M1 15.500l1-3 2 2z" fill="#222" /></svg> },
];

type Prop = { label: string; kind: "combo" | "color" | "weight" | "input"; value?: string };
const properties: Prop[] = [
  { label: "Layer:", kind: "combo", value: "" },
  { label: "Color:", kind: "color", value: "By Layer" },
  { label: "Lineweight:", kind: "weight", value: "By Layer" },
  { label: "Linetype:", kind: "combo", value: "By Layer" },
  { label: "Linetype Scale:", kind: "input" },
  { label: "Draw Order:", kind: "input" },
  { label: "Handle:", kind: "input" },
];

const DropArrow = ({ fill }: { fill: string }) => (
  <ComboArrow width="8" height="5" aria-hidden="true"><path d="M0 0h8L4 5z" fill={fill} /></ComboArrow>
);

const PropertyField = ({ label, kind, value }: Prop) => {
  const id = "prop-" + label.replace(/\W/g, "").toLowerCase();
  const Box = kind === "combo" ? Combo : IconCombo;
  return (
    <PropertyRow>
      <label htmlFor={id}>{label}</label>
      {kind === "input" ? (
        <PropertyInput id={id} disabled />
      ) : (
        <Box $disabled>
          <select id={id} disabled><option>{value}</option></select>
          {kind === "color" && <Swatch width="16" height="11"><rect x=".5" y=".5" width="15" height="10" fill="#fff" stroke="#555" /></Swatch>}
          {kind === "weight" && <Swatch width="16" height="11"><path d="M0 5.500h16" stroke="#555" /></Swatch>}
          <DropArrow fill="#dedbd7" />
        </Box>
      )}
    </PropertyRow>
  );
};

const PanelIcon = ({ children }: { children: React.ReactNode }) => (
  <Icon>
    <rect x="2.500" y="2.500" width="21" height="20" fill="#fbfbfa" stroke="#b2b2b2" />
    <rect x="3" y="3" width="20" height="3" fill="#0a0a0a" />
    <rect x="3" y="3" width="3" height="3" fill="#ddd" />
    {children}
  </Icon>
);

const menus = ["File", "Edit", "View", "Select", "Draw", "Dimension", "Modify", "Snap", "Info", "Layer", "Block", "Window", "Misc", "Help"];

export default function App() {
  return (
    <>
      <GlobalStyle />
      <Desktop>
        <Window>
          <TitleBar>
            <Title>piramide su xz.dxf * - QCAD</Title>
            <WindowButtons>
              {[
                ["Minimize", "M7.500 13.500h8"],
                ["Maximize", "M7.500 7.500h7v7h-7z"],
                ["Close", "M7.500 7.500l7 7M14.500 7.500l-7 7"],
              ].map(([name, d]) => (
                <WindowButton key={name} aria-label={name}>
                  <svg width="22" height="22"><path d={d} fill="none" stroke="#fff" strokeWidth="1.300" /></svg>
                </WindowButton>
              ))}
            </WindowButtons>
          </TitleBar>

          <MenuBar>
            {menus.map((m) => <MenuItem key={m}>{m}</MenuItem>)}
          </MenuBar>

          <ToolBar>
            <ToolGroup $gap={17}>
              <BarGrip $w={5} $h={17} />
              <ToolButton aria-label="Select"><CursorIcon /></ToolButton>
            </ToolGroup>
            <ToolGroup><BarGrip $w={5} $h={17} /><Tools items={fileTools} /></ToolGroup>
            <ToolGroup><BarGrip $w={5} $h={17} /><Tools items={editTools} /></ToolGroup>
            <ToolGroup><BarGrip $w={5} $h={17} /><Tools items={viewTools} /></ToolGroup>
          </ToolBar>

          <ToolBar>
            <ToolGroup>
              <BarGrip $w={5} $h={17} />
              <CurrentTool aria-label="Line tools">
                <svg width="18" height="14"><Ink d="M3 11L15 3" c="#666" /><Dots r={1.3} at={[[3, 11], [15, 3]]} /></svg>
              </CurrentTool>
              <Divider />
              <Tools items={lineTools} />
            </ToolGroup>
          </ToolBar>

          <Body>
            <SnapDock>
              <Grip $w={18} $h={6} />
              <BackButton aria-label="Back"><svg width="9" height="8"><polygon points="9,0 9,8 0,4" /></svg></BackButton>
              {snapGroups.map((group, i) => (
                <SnapGroup key={i}>
                  {group.map((t) => (
                    <SnapButton key={t.name} $on={t.on} aria-pressed={t.on} aria-label={t.name}>
                      {t.art ? <Snap>{t.art}</Snap> : t.name}
                    </SnapButton>
                  ))}
                </SnapGroup>
              ))}
            </SnapDock>

            <Center>
              <TabBar>
                <Tab>
                  <svg width="16" height="16" aria-hidden="true">
                    <circle cx="7" cy="7" r="5.500" fill="#f4f4ff" stroke="#3a489c" strokeWidth="2" />
                    <path d="M3.500 7.500h7M7 4v6" stroke="#d5a52a" />
                    <path d="M10 10l4 3" stroke="#d9822b" strokeWidth="2.500" />
                  </svg>
                  <span>* piramide su xz.dxf</span>
                  <TabClose aria-label="Close tab">
                    <svg width="16" height="14"><path d="M4 2l8 10M12 2L4 12" stroke="#111" strokeWidth="2" /><path d="M2 12h3M10 12h3" stroke="#111" /></svg>
                  </TabClose>
                </Tab>
                <TabFill />
              </TabBar>
              <ViewGrid>
                <HorizontalRuler />
                <VerticalRuler />
                <DrawingView />
                <ScrollBar dir="column" sizes={[225, 198, 227]} />
                <span />
                <BottomRow>
                  <ScrollBar dir="row" sizes={[161, 103, 153]} />
                  <Readout>10 &lt; 100</Readout>
                </BottomRow>
              </ViewGrid>
              <Splitter><Grip $w={16} $h={3} /></Splitter>
              <CommandLog>
                <LogLines>
                  {["polygonss", "linemenu", "line"].map((c) => (
                    <LogLine key={c}><em>Command:</em> {c}</LogLine>
                  ))}
                </LogLines>
                <LogScroll><ScrollBar dir="column" sizes={[0, 25, 0]} /></LogScroll>
              </CommandLog>
              <CommandRow>
                <label htmlFor="command">First point:</label>
                <CommandInput id="command" />
                <SmallButton aria-label="Command options">
                  <svg width="14" height="11"><rect x=".5" y=".5" width="13" height="10" fill="#fff" stroke="#222" /><rect width="14" height="4" /></svg>
                </SmallButton>
              </CommandRow>
            </Center>

            <RightDock>
              <PanelHead><PanelTitle>Layer List</PanelTitle><PanelButtons /></PanelHead>
              <LayerTools>
                {layerTools.map((t) => <LayerTool key={t.name} aria-label={t.name}>{t.art}</LayerTool>)}
              </LayerTools>
              <LayerItems>
                {layers.map((name) => {
                  const selected = name === "3h-tratt";
                  return (
                    <LayerItem key={name} $selected={selected}>
                      {selected ? <Eye color="#12374f" back="#2f8cc6" /> : <Eye />}
                      <Lock />
                      <LayerName>{name}</LayerName>
                    </LayerItem>
                  );
                })}
              </LayerItems>
              <LayerSplitter><Grip $w={16} $h={3} /></LayerSplitter>
              <PanelHead><PanelTitle>Property Editor</PanelTitle><PanelButtons /></PanelHead>
              <PropertyBox>
                <SelectionRow>
                  <label htmlFor="selection">Selection:</label>
                  <Combo>
                    <select id="selection"><option>No Selection</option></select>
                    <DropArrow fill="#4a4a4a" />
                  </Combo>
                </SelectionRow>
                <GroupTitle>General Properties</GroupTitle>
                <PropertyGroup>
                  {properties.map((p) => <PropertyField key={p.label} {...p} />)}
                </PropertyGroup>
              </PropertyBox>
            </RightDock>

            <SideBar>
              <SideGrip $w={9} $h={6} />
              <SideButton $on aria-pressed aria-label="Layer list">
                <PanelIcon><path d="M8 12l5-3v8l-5 3z" fill="#999" /><path d="M13 9l5-1v8l-5 2z" fill="#f1dada" stroke="#c87575" /></PanelIcon>
              </SideButton>
              <SideButton aria-label="Block list">
                <PanelIcon><rect x="7.500" y="10.500" width="8" height="6" fill="none" stroke="#a59055" /><circle cx="15.500" cy="15.500" r="3.500" fill="none" stroke="#a59055" /></PanelIcon>
              </SideButton>
              <SideLine />
              <SideButton $on aria-pressed aria-label="Property editor">
                <PanelIcon>{[9, 13, 17].map((y) => <g key={y}><rect x="5" y={y} width="4" height="2" /><rect x="11.500" y={y - 0.5} width="9" height="2" fill="#ddd" stroke="#888" /></g>)}</PanelIcon>
              </SideButton>
              <SideLine />
              <SideButton $on aria-pressed aria-label="Command line">
                <PanelIcon><path d="M5 9.500h9M5 12.500h11M5 15.500h8" stroke="#b5b5b5" /><rect x="3" y="19" width="20" height="3" fill="#ccc" /></PanelIcon>
              </SideButton>
            </SideBar>
          </Body>

          <StatusBar>
            <Coordinates>216.8232,146.1827<br />@73.4068,46.1827</Coordinates>
            <Coordinates $line>261.499&lt;34°<br />@86.7261&lt;32°</Coordinates>
            <Grip $w={3} $h={17} />
            <MouseHints>
              First point
              <svg width="20" height="31" viewBox="0 0 20 31" fill="none" stroke="#666" aria-hidden="true">
                <rect x="1" y="1" width="18" height="29" rx="9" fill="#fff" />
                <path d="M1 14q9-4 18 0" strokeWidth="1.500" />
                <path d="M10 1v2" /><rect x="8.500" y="3" width="3" height="7" rx="1.500" />
              </svg>
              Cancel
            </MouseHints>
            <Grip $w={3} $h={17} />
            <StatusText>No entities selected.</StatusText>
            <Grip $w={3} $h={17} />
            <SizeGrip>
              <svg width="14" height="14" aria-hidden="true">
                <Dots r={0.7} fill="#8f8c89" at={[[11, 2], [8, 5], [11, 5], [5, 8], [8, 8], [11, 8], [2, 11], [5, 11], [8, 11], [11, 11]]} />
              </svg>
            </SizeGrip>
          </StatusBar>
        </Window>
      </Desktop>
    </>
  );
}
